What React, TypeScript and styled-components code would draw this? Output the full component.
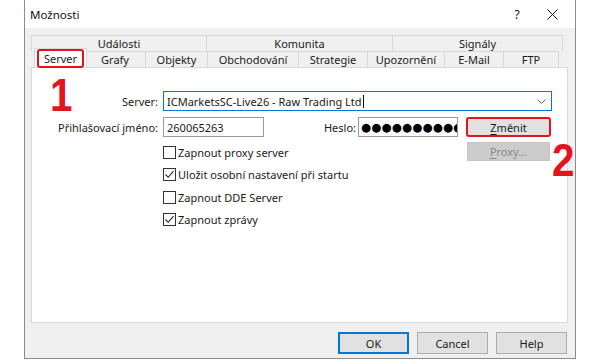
import React from 'react';
import styled, { createGlobalStyle } from 'styled-components';

const UPPER_TABS = [
  { name: 'Události', width: 176 },
  { name: 'Komunita', width: 187 },
  { name: 'Signály', width: 171 },
];

const LOWER_TABS = [
  { name: 'Server', width: 53 },
  { name: 'Grafy', width: 62 },
  { name: 'Objekty', width: 63 },
  { name: 'Obchodování', width: 92 },
  { name: 'Strategie', width: 70 },
  { name: 'Upozornění', width: 78 },
  { name: 'E-Mail', width: 60 },
  { name: 'FTP', width: 56 },
];

const OPTIONS = [
  { label: 'Zapnout proxy server', checked: false },
  { label: 'Uložit osobní nastavení při startu', checked: true },
  { label: 'Zapnout DDE Server', checked: false },
  { label: 'Zapnout zprávy', checked: true },
];

const App = () => {
  return (
    <>
      <GlobalStyle />
      <Dialog>
        <TitleBar>
          <Title>Možnosti</Title>
          <HelpButton>?</HelpButton>
          <CloseButton>
            <svg width='11' height='11' viewBox='0 0 11 11'>
              <path d='M0.5 0.5 L10.5 10.5 M10.5 0.5 L0.5 10.5' stroke='#111' strokeWidth='1' />
            </svg>
          </CloseButton>
        </TitleBar>

        <Body>
          <TabStrip>
            <TabRow>
              {UPPER_TABS.map(tab => (
                <Tab key={tab.name} $width={tab.width}>
                  {tab.name}
                </Tab>
              ))}
            </TabRow>
            <TabRow>
              {LOWER_TABS.map((tab, i) => (
                <Tab key={tab.name} $width={tab.width} $active={i === 0}>
                  {tab.name}
                </Tab>
              ))}
            </TabRow>
          </TabStrip>

          <Panel>
            <Marker $left={18} $top={4}>1</Marker>
            <Marker $left={520} $top={69}>2</Marker>

            <FormGrid>
              <Label>Server:</Label>
              <Combo>
                <ComboText>
                  ICMarketsSC-Live26 - Raw Trading Ltd
                  <Caret />
                </ComboText>
                <svg width='9' height='5' viewBox='0 0 9 5'>
                  <path d='M0.5 0.5 L4.5 4.5 L8.5 0.5' fill='none' stroke='#666' strokeWidth='1' />
                </svg>
              </Combo>

              <Label>Přihlašovací jméno:</Label>
              <TextBox>260065263</TextBox>
              <Label $tight>Heslo:</Label>
              <PasswordBox>●●●●●●●●●●●</PasswordBox>
              <ChangeButton>
                <u>Z</u>měnit
              </ChangeButton>

              <OptionList>
                {OPTIONS.map(option => (
                  <Option key={option.label}>
                    <Box>
                      {option.checked && (
                        <svg width='11' height='11' viewBox='0 0 11 11'>
                          <path d='M1.5 5.5 L4.2 8.3 L9.5 2.2' fill='none' stroke='#222' strokeWidth='1.1' />
                        </svg>
                      )}
                    </Box>
                    {option.label}
                  </Option>
                ))}
              </OptionList>
              <ProxyButton disabled>
                <u>P</u>roxy...
              </ProxyButton>
            </FormGrid>
          </Panel>

          <Footer>
            <DialogButton $primary>OK</DialogButton>
            <DialogButton>Cancel</DialogButton>
            <DialogButton>Help</DialogButton>
          </Footer>
        </Body>
      </Dialog>
    </>
  );
};

const GlobalStyle = createGlobalStyle`
  html, body {
    margin: 0;
    padding: 0;
    background: #ffffff;
  }
  body {
    font-family: 'Noto Sans', 'Open Sans', sans-serif;
    font-size: 11px;
    color: #1a1a1a;
  }
`;

const Dialog = styled.div`
  width: 552px;
  height: 359px;
  margin-left: 24px;
  box-sizing: border-box;
  border: 1px solid #8c8c8c;
  border-top: none;
  display: flex;
  flex-direction: column;
  background: #f0f0f0;
`;

const TitleBar = styled.div`
  height: 28px;
  flex-shrink: 0;
  display: flex;
  align-items: center;
  padding-left: 5px;
  background: #ffffff;
`;

const Title = styled.div`
  flex: 1;
  font-size: 11.5px;
  color: #111;
`;

const HelpButton = styled.div`
  width: 24px;
  text-align: center;
  font-size: 12px;
  color: #111;
`;

const CloseButton = styled.div`
  width: 46px;
  height: 28px;
  display: flex;
  align-items: center;
  justify-content: center;
`;

const Body = styled.div`
  flex: 1;
  display: flex;
  flex-direction: column;
  padding: 7px 7px 0 6px;
`;

const TabStrip = styled.div`
  display: flex;
  flex-direction: column;
  padding: 0 1px;
`;

const TabRow = styled.div`
  display: flex;
  height: 16px;
`;

const Tab = styled.div<{ $width: number; $active?: boolean }>`
  position: relative;
  box-sizing: border-box;
  width: ${p => p.$width}px;
  display: flex;
  align-items: center;
  justify-content: center;
  border: 1px solid #d9d9d9;
  border-bottom: none;
  margin-left: -1px;
  background: #f0f0f0;
  color: #1a1a1a;
  line-height: 1;

  ${p =>
    p.$active &&
    `
    background: #ffffff;
    height: 19px;
    margin-top: -3px;
    margin-left: 2px;
    margin-right: -2px;
    padding-top: 1px;
    z-index: 2;

    &::after {
      content: '';
      position: absolute;
      inset: 0 2px -1px 2px;
      border: 2px solid #e3141c;
      border-radius: 3px;
    }
  `}
`;

const Panel = styled.div`
  position: relative;
  height: 256px;
  box-sizing: border-box;
  border: 1px solid #d9d9d9;
  background: #ffffff;
  padding-top: 23px;
`;

const Marker = styled.div<{ $left: number; $top: number }>`
  position: absolute;
  left: ${p => p.$left}px;
  top: ${p => p.$top}px;
  font-family: 'Liberation Sans', Arial, sans-serif;
  font-weight: 700;
  font-size: 46px;
  line-height: 1;
  color: #e3141c;
  transform: scaleX(0.88);
  transform-origin: left top;
`;

const FormGrid = styled.div`
  display: grid;
  grid-template-columns: 131px 101px 94px 100px 93px;
  grid-template-rows: 26px 25px 20px;
  align-items: start;
`;

const Label = styled.div<{ $tight?: boolean }>`
  height: 20px;
  display: flex;
  align-items: center;
  justify-content: flex-end;
  padding-right: ${p => (p.$tight ? 2 : 5)}px;
  white-space: nowrap;
`;

const Combo = styled.div`
  grid-column: 2 / 6;
  height: 20px;
  width: 389px;
  box-sizing: border-box;
  border: 1px solid #0078d7;
  display: flex;
  align-items: center;
  justify-content: space-between;
  padding: 0 5px 0 3px;
`;

const ComboText = styled.span`
  display: flex;
  align-items: center;
`;

const Caret = styled.span`
  display: inline-block;
  width: 1px;
  height: 13px;
  background: #111;
  margin-left: 1px;
`;

const TextBox = styled.div`
  height: 20px;
  box-sizing: border-box;
  border: 1px solid #9a9a9a;
  display: flex;
  align-items: center;
  padding-left: 3px;
`;

const PasswordBox = styled(TextBox)`
  overflow: hidden;
  white-space: nowrap;
  font-family: 'DejaVu Sans', sans-serif;
  font-size: 11.5px;
  letter-spacing: 0.2px;
  padding-left: 2px;
  color: #000;
`;

const ButtonBase = styled.button`
  font-family: 'Noto Sans', 'Open Sans', sans-serif;
  font-size: 11px;
  color: #1a1a1a;
  background: #e1e1e1;
  border: 1px solid #adadad;
  box-sizing: border-box;
  padding: 0;
  display: flex;
  align-items: center;
  justify-content: center;

  u {
    text-underline-offset: 2px;
  }
`;

const ChangeButton = styled(ButtonBase)`
  grid-column: 5;
  height: 20px;
  width: 85px;
  margin-left: 8px;
  border: 2px solid #e3141c;
  border-radius: 3px;
`;

const ProxyButton = styled(ButtonBase)`
  grid-column: 5;
  grid-row: 3;
  height: 19px;
  width: 83px;
  margin-left: 9px;
  background: #cccccc;
  border-color: #c4c4c4;
  color: #8a8a8a;
`;

const OptionList = styled.div`
  grid-column: 2 / 5;
  grid-row: 3 / 4;
  display: flex;
  flex-direction: column;
  gap: 2.5px;
`;

const Option = styled.div`
  height: 20px;
  display: flex;
  align-items: center;
  gap: 2px;
  white-space: nowrap;
`;

const Box = styled.span`
  width: 13px;
  height: 13px;
  box-sizing: border-box;
  border: 1px solid #333;
  background: #fff;
  display: flex;
  align-items: center;
  justify-content: center;
`;

const Footer = styled.div`
  flex: 1;
  display: flex;
  justify-content: flex-end;
  align-items: flex-start;
  gap: 8px;
  padding: 9px 1px 0 0;
`;

const DialogButton = styled(ButtonBase)<{ $primary?: boolean }>`
  width: 71px;
  height: 22px;
  ${p => p.$primary && 'border: 2px solid #0078d7;'}
`;

export default App;
